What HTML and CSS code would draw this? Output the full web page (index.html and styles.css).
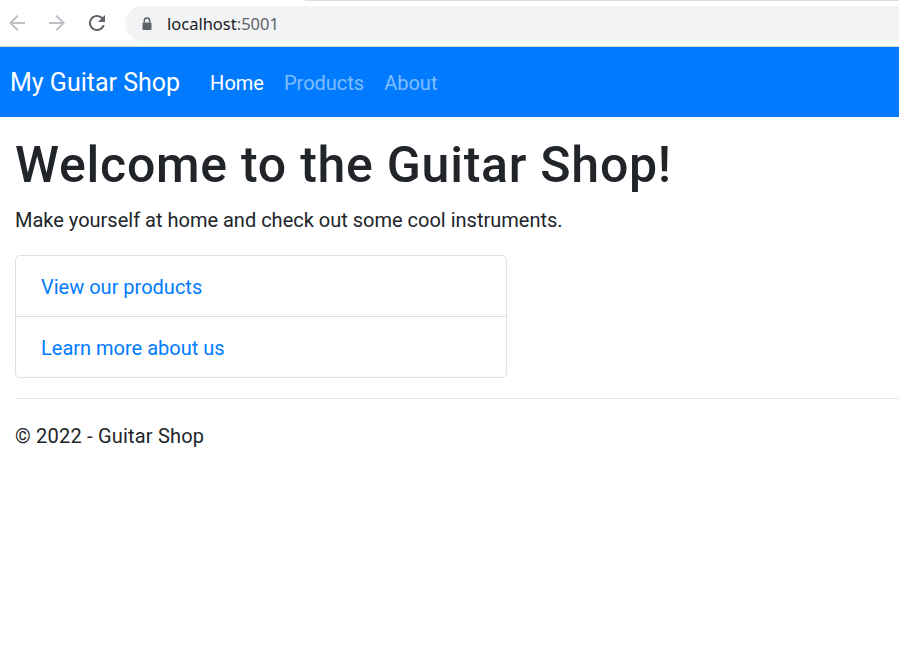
FILE: index.html
```html
<!DOCTYPE html>
<html lang="en">
<head>
<meta charset="utf-8">
<title>Home - My Guitar Shop</title>
<link rel="stylesheet" href="styles.css">
</head>
<body>
<div class="chrome">
  <div class="chrome-nav">
    <svg class="chrome-icon disabled" viewBox="0 0 24 24" width="24" height="24"><path d="M20 11H7.83l5.59-5.59L12 4l-8 8 8 8 1.41-1.41L7.83 13H20v-2z"/></svg>
    <svg class="chrome-icon disabled" viewBox="0 0 24 24" width="24" height="24"><path d="M4 11h12.17l-5.59-5.59L12 4l8 8-8 8-1.41-1.41L16.17 13H4v-2z"/></svg>
    <svg class="chrome-icon" viewBox="0 0 24 24" width="24" height="24"><path d="M17.65 6.35C16.2 4.9 14.21 4 12 4c-4.42 0-7.99 3.58-7.99 8s3.57 8 7.99 8c3.73 0 6.84-2.55 7.730-6h-2.08c-.82 2.33-3.04 4-5.650 4-3.31 0-6-2.69-6-6s2.69-6 6-6c1.66 0 3.140.69 4.220 1.78L13 11h7V4l-2.35 2.35z"/></svg>
  </div>
  <div class="omnibox">
    <svg class="lock" viewBox="0 0 10 13" width="10" height="13"><path d="M2.3 5.5V3.8a2.7 2.7 0 0 1 5.4 0v1.7" fill="none" stroke="#5f6368" stroke-width="1.5"/><rect x="0.5" y="5.5" width="9" height="7.5" rx="1" fill="#5f6368"/></svg>
    <span class="url">localhost<span class="port">:5001</span></span>
  </div>
</div>

<nav class="navbar">
  <a class="brand" href="#">My Guitar Shop</a>
  <ul class="nav">
    <li><a class="nav-link active" href="#">Home</a></li>
    <li><a class="nav-link" href="#">Products</a></li>
    <li><a class="nav-link" href="#">About</a></li>
  </ul>
</nav>

<main class="content">
  <h1 class="title">Welcome to the Guitar Shop!</h1>
  <p class="lead-text">Make yourself at home and check out some cool instruments.</p>
  <div class="list-group">
    <a class="list-item" href="#">View our products</a>
    <a class="list-item" href="#">Learn more about us</a>
  </div>
  <hr class="divider">
  <footer class="footer">© 2022 - Guitar Shop</footer>
</main>
</body>
</html>
```

FILE: styles.css
```css
* { box-sizing: border-box; }

body {
  margin: 0;
  font-family: Roboto, "Open Sans", sans-serif;
  color: #212529;
  background: #fff;
}

.chrome {
  position: relative;
  height: 47px;
  display: flex;
  align-items: flex-start;
  border-bottom: 1px solid #d4d6d9;
  background: #fff;
}

.chrome::before {
  content: "";
  position: absolute;
  top: 0;
  left: 305px;
  right: 0;
  height: 1px;
  background: #dadce0;
}

.chrome-nav {
  display: flex;
  gap: 16px;
  padding: 11px 0 0 5px;
}

.chrome-icon { fill: #5f6368; display: block; }
.chrome-icon.disabled { fill: #bdc1c6; }

.omnibox {
  margin: 6px 0 0 16px;
  flex: 1;
  height: 35px;
  border-radius: 18px 0 0 18px;
  background: #f1f3f4;
  display: flex;
  align-items: center;
  padding-left: 17px;
}

.lock { display: block; margin-top: -1px; }

.url {
  margin-left: 15px;
  font-family: "Noto Sans", "Open Sans", sans-serif;
  font-size: 16.5px;
  color: #202124;
}

.port { color: #5f6368; }

.navbar {
  height: 70px;
  background: #007bff;
  display: flex;
  align-items: center;
  padding: 1px 10px 0;
}

.brand {
  color: #fff;
  text-decoration: none;
  font-size: 25px;
  line-height: 1.5;
  margin-right: 20px;
}

.nav {
  display: flex;
  list-style: none;
  margin: 0;
  padding: 0;
}

.nav-link {
  display: block;
  padding: 0 10px;
  font-size: 20px;
  line-height: 30px;
  color: rgba(255, 255, 255, 0.5);
  text-decoration: none;
}

.nav-link.active { color: #fff; }

.content {
  padding: 18px 0 0 15px;
}

.title {
  margin: 0 0 10px;
  font-size: 50px;
  font-weight: 500;
  line-height: 60px;
  letter-spacing: 0.75px;
}

.lead-text {
  margin: 0 0 20px;
  padding-top: 1px;
  font-size: 20px;
  line-height: 29px;
}

.list-group {
  width: 492px;
  border: 1px solid #dfdfdf;
  border-radius: 5px;
  display: flex;
  flex-direction: column;
}

.list-item {
  display: block;
  padding: 16px 25px 14px;
  font-size: 20px;
  line-height: 30px;
  color: #007bff;
  text-decoration: none;
}

.list-item + .list-item { border-top: 1px solid #dfdfdf; }

.divider {
  margin: 20px 0;
  border: 0;
  border-top: 1px solid #e5e5e5;
}

.footer {
  padding-top: 2px;
  font-size: 20px;
  line-height: 30px;
  letter-spacing: 0.2px;
}
```
